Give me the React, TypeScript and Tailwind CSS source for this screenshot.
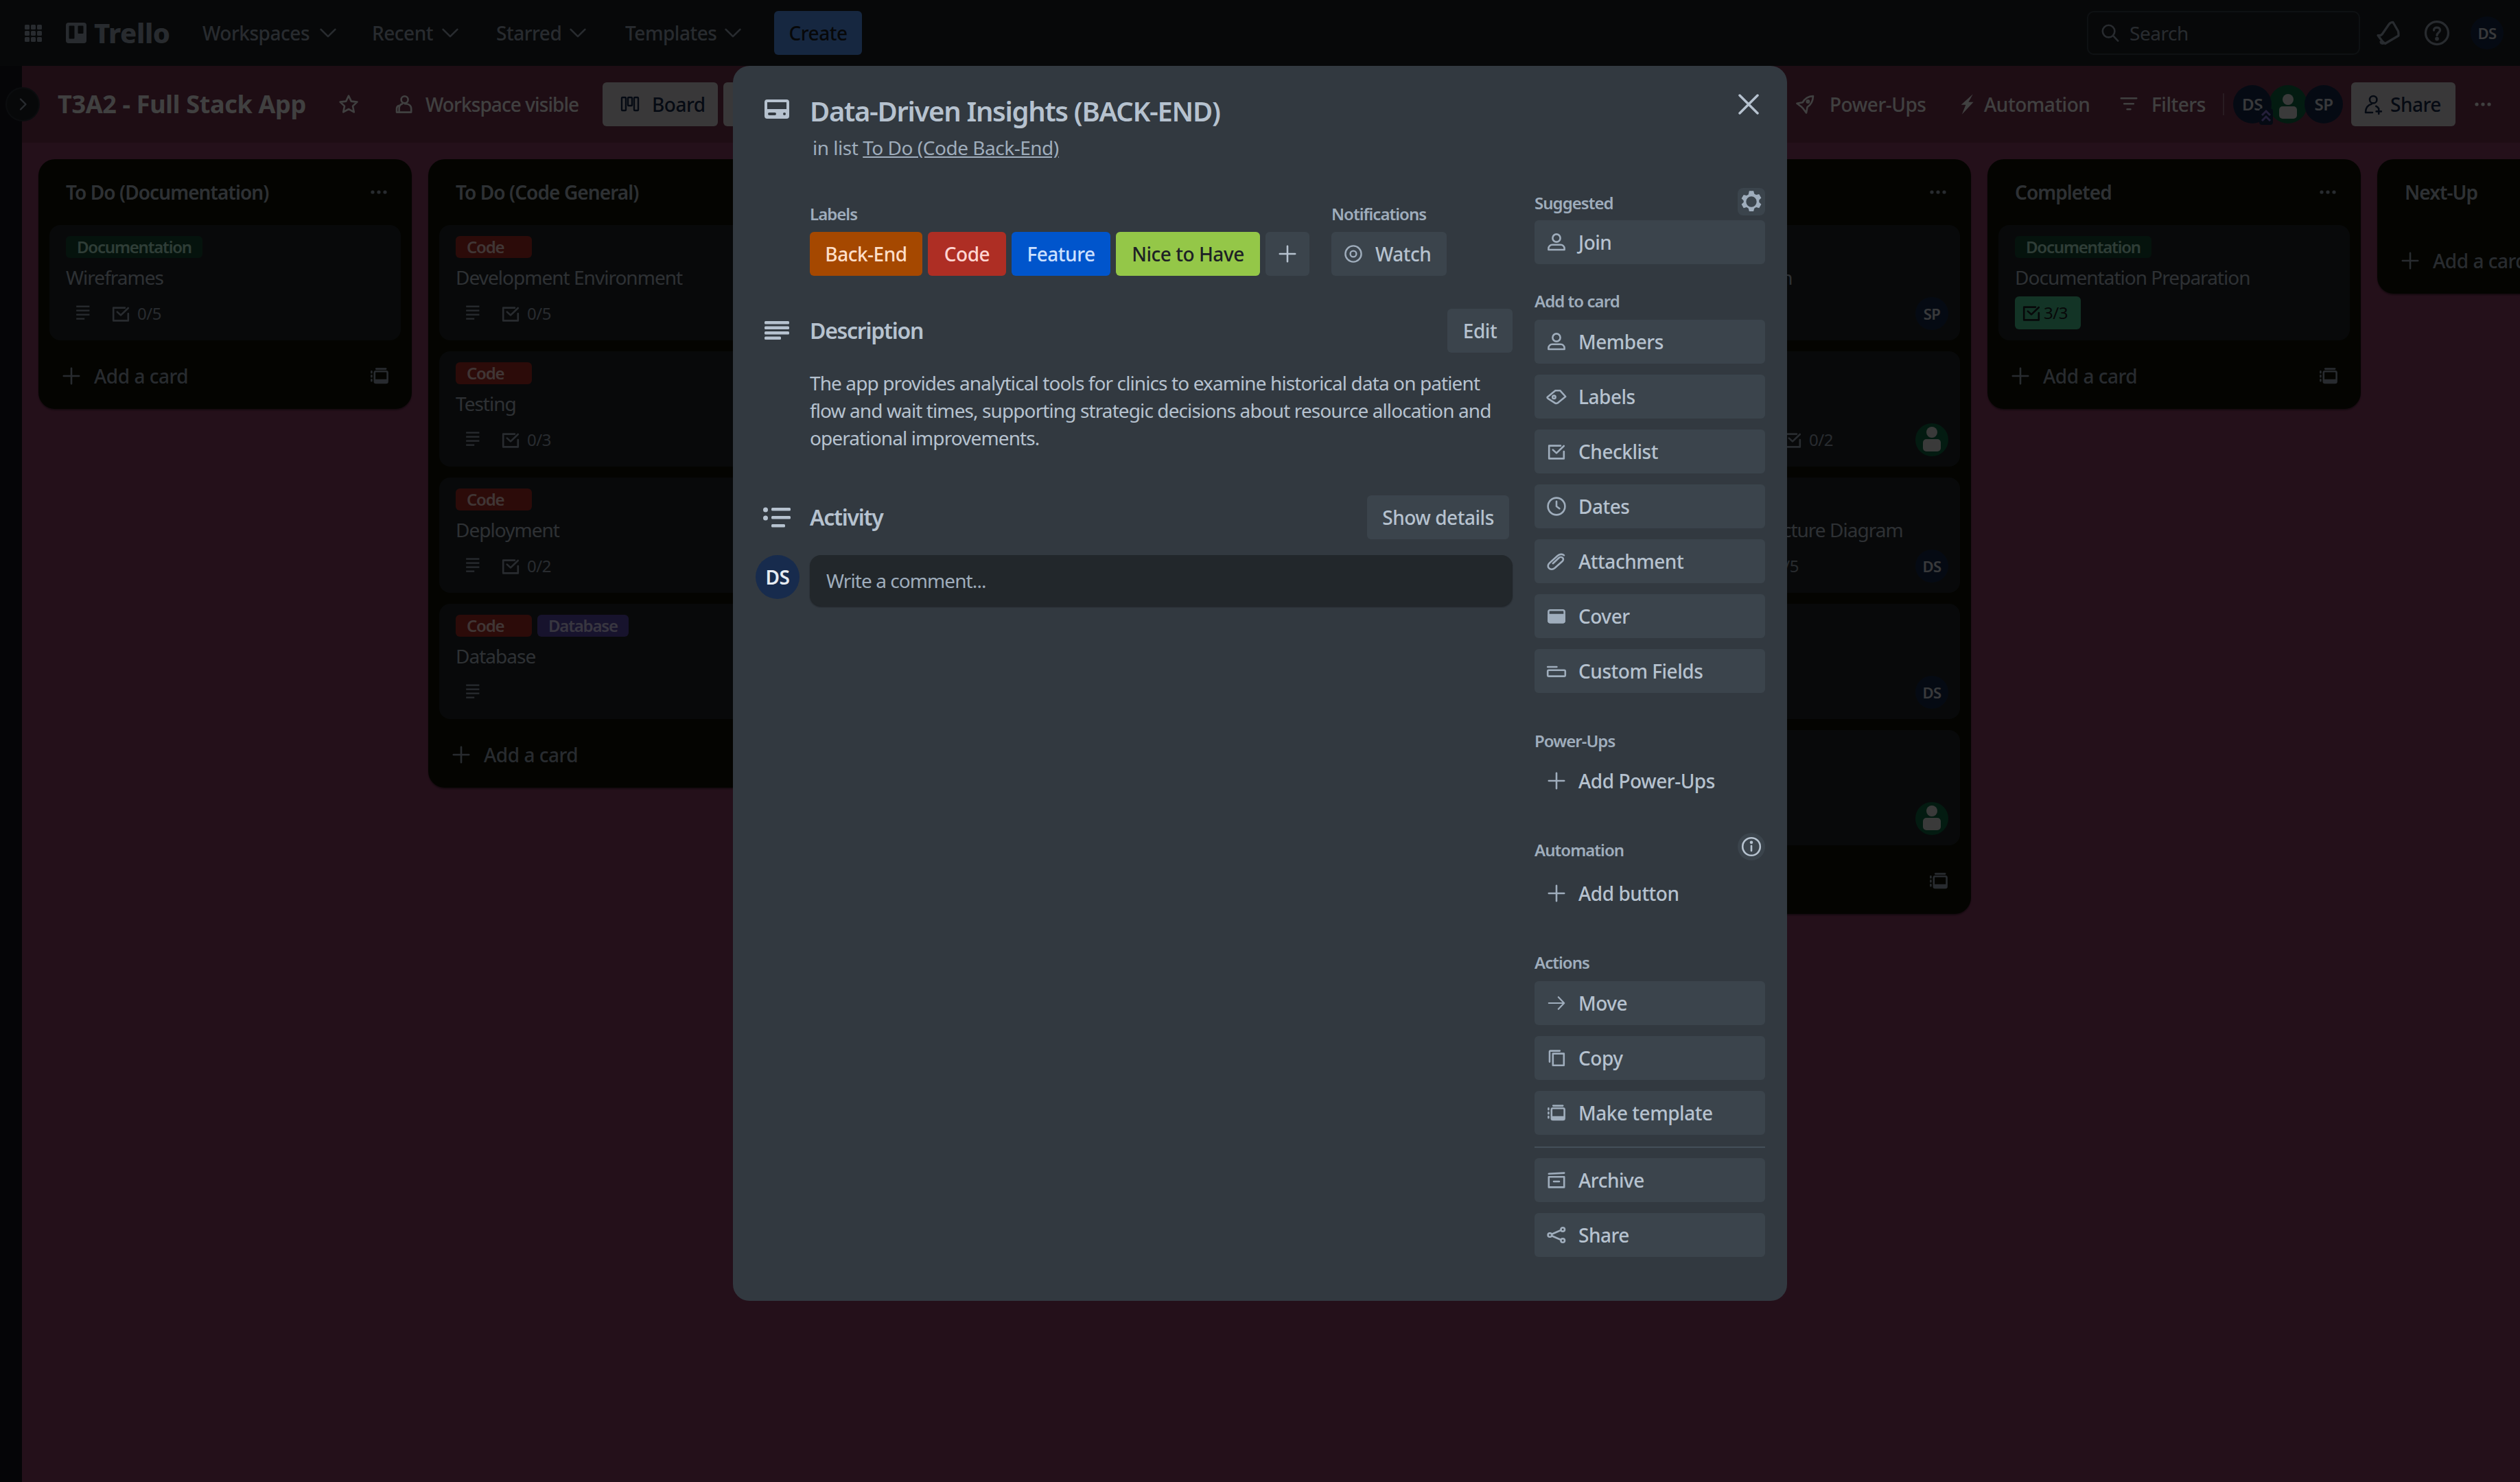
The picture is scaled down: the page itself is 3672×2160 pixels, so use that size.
import type { ReactNode } from "react";

type IconProps = { size?: number; vb?: number; className?: string; sw?: number; children: ReactNode };

function Icon({ size = 32, vb = 16, className = "", sw = 1.3, children }: IconProps) {
  return (
    <svg
      width={size}
      height={size}
      viewBox={`0 0 ${vb} ${vb}`}
      fill="none"
      stroke="currentColor"
      strokeWidth={sw}
      strokeLinecap="round"
      strokeLinejoin="round"
      className={`flex-none ${className}`}
    >
      {children}
    </svg>
  );
}

const Person = () => (
  <Icon>
    <circle cx="8" cy="5" r="2.8" />
    <path d="M2.200 13.500v-.9a2.700 2.700 0 0 1 2.700-2.700h6.200a2.700 2.700 0 0 1 2.700 2.700v.9z" />
  </Icon>
);
const Tag = () => (
  <Icon>
    <path d="M1.400 8.400 7.200 3.600h3.400l4 4.400-5.800 4.700c-.5.300-1 .4-1.500.2L1.800 9.400c-.4-.3-.6-.7-.4-1z" />
    <circle cx="6.200" cy="8.400" r="1.100" />
  </Icon>
);
const Check = ({ className = "" }: { className?: string }) => (
  <Icon className={className}>
    <path d="M13.400 8v5.200H2.600V3.800H11" />
    <path d="m5.400 6.800 2.600 2.400 5.400-5.200" />
  </Icon>
);
const Clock = () => (
  <Icon>
    <circle cx="8" cy="8" r="6.200" />
    <path d="M8 4.400V8l2.200 1.600" />
  </Icon>
);
const Clip = () => (
  <Icon>
    <path d="m5.400 9.600 4.400-4.100c.8-.7 2-.7 2.700 0 .7.700.6 1.800-.2 2.500l-5.600 5c-1.300 1.100-3.200 1.100-4.200.1-1-1-.8-2.700.4-3.800l5.900-5.300c1.500-1.300 3.600-1.400 4.700-.3" />
  </Icon>
);
const Cover = () => (
  <Icon>
    <rect x="2.200" y="3.600" width="11.600" height="9" rx="1.200" />
    <path d="M2.200 7h11.600v4.400a1.200 1.200 0 0 1-1.200 1.200H3.400a1.200 1.200 0 0 1-1.200-1.200z" fill="currentColor" />
  </Icon>
);
const Fields = () => (
  <Icon>
    <path d="M1.600 5h6.600" />
    <rect x="1.600" y="7.400" width="12.800" height="4.400" rx="0.800" />
  </Icon>
);
const Plus = ({ className = "" }: { className?: string }) => (
  <Icon className={className}>
    <path d="M8 2.400v11.200M2.400 8h11.200" />
  </Icon>
);
const Arrow = () => (
  <Icon sw={1.100}>
    <path d="M2.400 8h11M9.400 3.600 13.600 8l-4.200 4.400" />
  </Icon>
);
const Copy = () => (
  <Icon>
    <rect x="5.400" y="4.800" width="8" height="8.600" />
    <path d="M3 10.800V3.400c0-.3.2-.6.600-.6h6.800" />
  </Icon>
);
const Template = ({ className = "" }: { className?: string }) => (
  <Icon className={className}>
    <rect x="4.400" y="4.600" width="9.400" height="8.400" rx="1" />
    <path d="M9 10.400h4.800V13H5.400a1 1 0 0 1-1-1v-1.600z" fill="currentColor" stroke="none" />
    <path d="M5.600 2.800h7M2.200 4.600v1M2.200 7.600v1M2.200 10.600v1" />
  </Icon>
);
const Archive = () => (
  <Icon>
    <rect x="2.400" y="5.600" width="11.200" height="7.600" />
    <path d="M2.400 3.400 13.600 2.800M6 9h4" />
  </Icon>
);
const ShareNodes = () => (
  <Icon>
    <circle cx="3.200" cy="8" r="1.400" />
    <circle cx="12.600" cy="4" r="1.400" />
    <circle cx="12.600" cy="12" r="1.400" />
    <path d="m4.600 7.400 6.600-2.900M4.600 8.600l6.600 2.900" />
  </Icon>
);
const Gear = () => (
  <svg width="36" height="36" viewBox="0 0 16 16" className="flex-none" fill="currentColor">
    <path
      fillRule="evenodd"
      d="M6.600 1h2.800l.5 1.900 1.200.7 1.900-.5 1.400 2.400-1.400 1.400v1.400l1.400 1.400-1.400 2.400-1.900-.5-1.200.7-.5 1.900H6.600l-.5-1.900-1.200-.7-1.900.5-1.400-2.400 1.400-1.400V7.300L1.600 5.900 3 3.500l1.900.5 1.200-.7zM8 4.600a3.400 3.400 0 1 0 0 6.800 3.400 3.400 0 0 0 0-6.800z"
    />
  </svg>
);
const Info = () => (
  <Icon>
    <circle cx="8" cy="8" r="6.400" />
    <path d="M8 7.400v3.600" />
    <circle cx="8" cy="4.900" r="0.500" fill="currentColor" />
  </Icon>
);
const Chevron = () => (
  <Icon className="ml-auto">
    <path d="m2.800 5.400 5.200 5.200 5.200-5.200" />
  </Icon>
);
const Dots = () => (
  <svg width="32" height="32" viewBox="0 0 32 32" fill="currentColor" className="flex-none">
    <circle cx="7" cy="16" r="2.600" />
    <circle cx="16" cy="16" r="2.600" />
    <circle cx="25" cy="16" r="2.600" />
  </svg>
);
const Lines = ({ className = "" }: { className?: string }) => (
  <Icon className={className} sw={1.100}>
    <path d="M3.600 2.800h9.600M3.600 5.800h9.600M3.600 8.800h9.600M3.600 11.800h6" strokeLinecap="butt" />
  </Icon>
);
const Star = () => (
  <Icon>
    <path d="m8 1.800 1.900 4 4.300.5-3.200 3 .9 4.400L8 11.500l-3.900 2.200.9-4.400-3.200-3 4.300-.5z" />
  </Icon>
);
const PeopleVisible = () => (
  <Icon>
    <circle cx="8.800" cy="4.600" r="2.500" />
    <path d="M4.800 13.800V11c0-1.800 1-3 2.400-3.400M13.600 13.800H3v-2.600c0-1 .6-1.800 1.400-2.200M9 7.600c2.600 0 4.600 1.200 4.600 3.600v2.600" />
  </Icon>
);
const Rocket = () => (
  <Icon>
    <path d="M14 2c-3.600.2-6 1.600-7.600 4.600L2.200 7.400l3 2.200 1.600 1.600 2.200 3 .8-4.200C12.400 8.400 13.800 5.600 14 2z" />
    <circle cx="10.200" cy="6" r="0.800" />
  </Icon>
);
const Bolt = () => (
  <svg width="32" height="32" viewBox="0 0 16 16" fill="currentColor" className="flex-none">
    <path d="M12.400.6 3.800 8.400h3.400L4.400 15.400l8.400-9H9.200z" />
  </svg>
);
const Filter = () => (
  <Icon sw={1.300}>
    <path d="M2.400 3.600h11.200M4.600 7.600h6.800M6.800 11.600h2.400" />
  </Icon>
);
const ShareUser = () => (
  <Icon>
    <circle cx="7.600" cy="4.600" r="2.600" />
    <path d="M2 14c0-3 1.600-5.400 4.400-6.200M9.600 9.400c1 .4 1.600 1 2 1.800M7 14H2M11.600 11.400v3.600M9.800 13.200h3.600" />
  </Icon>
);
const Search = () => (
  <Icon>
    <circle cx="6.800" cy="6.800" r="4.400" />
    <path d="m10.200 10.200 3.400 3.600" />
  </Icon>
);
const Bell = () => (
  <Icon size={40}>
    <path d="M10.800 1.800 13.800 7c.3 1.200.2 2 .2 2.600l-7.800 4.600c-.8-.4-1.400-1-2-1.800L2 9.400c.8.2 1.800 0 2.400-.6l4-5.800c.6-.8 1.400-1.200 2.400-1.200z" />
    <path d="M3.600 13.200c.2.800.8 1.200 1.600.8" />
  </Icon>
);
const Help = () => (
  <Icon size={40}>
    <circle cx="8" cy="8" r="6.600" />
    <path d="M6.200 6.400C6.200 5.400 7 4.800 8 4.800s1.800.6 1.800 1.600c0 1.400-1.800 1.400-1.800 3" />
    <circle cx="8" cy="11.400" r="0.500" fill="currentColor" />
  </Icon>
);
const AppGrid = () => (
  <svg width="32" height="32" viewBox="0 0 32 32" fill="currentColor" className="flex-none">
    {[4, 13, 22].flatMap((y) =>
      [4, 13, 22].map((x) => <rect key={`${x}-${y}`} x={x} y={y} width="7" height="7" rx="1.500" />),
    )}
  </svg>
);

function Avatar({ text, size = "md" }: { text?: string; size?: "sm" | "md" }) {
  const box = size === "sm" ? "w-[48px] h-[48px] text-[22px]" : "w-[56px] h-[56px] text-[24px]";
  if (!text) {
    return (
      <div className={`${box} flex-none rounded-full bg-[#0d6b45] flex flex-col items-center justify-end overflow-hidden`}>
        <div className="w-[16px] h-[16px] rounded-full bg-[#e6e6e6] mb-[2px]" />
        <div className="w-[26px] h-[18px] rounded-[5px] bg-[#e6e6e6] mb-[7px]" />
      </div>
    );
  }
  return (
    <div className={`${box} flex-none rounded-full bg-[#172b4d] text-[#e0e4ea] font-semibold flex items-center justify-center`}>
      {text}
    </div>
  );
}

const LABEL_STYLES: Record<string, string> = {
  Documentation: "bg-[#164b35] text-[#baf3db]",
  Code: "bg-[#ae2e24] text-[#ffd5d2]",
  Database: "bg-[#5e4db2] text-[#dfd8fd]",
};

type CardData = {
  labels?: string[];
  title?: string;
  desc?: boolean;
  check?: string;
  done?: boolean;
  member?: string | null;
  shift?: string;
};

function Card({ labels = [], title, desc, check, done, member, shift = "" }: CardData) {
  return (
    <div className="h-[168px] rounded-[16px] bg-[#22272b] pt-[16px] flex flex-col">
      <div className="flex gap-[8px] px-[24px] h-[32px]">
        {labels.map((l) => (
          <span
            key={l}
            className={`${LABEL_STYLES[l]} min-w-[111px] h-[32px] rounded-[6px] px-[16px] text-[24px] leading-[32px] font-semibold tracking-[-0.05em]`}
          >
            {l}
          </span>
        ))}
      </div>
      <div className="mt-[8px] h-[40px] px-[24px] text-[28px] leading-[40px] text-[#b6c2cf] whitespace-nowrap tracking-[-0.035em]">
        {title}
      </div>
      {done ? (
        <div className="mt-[8px] ml-[24px] w-[96px] h-[48px] rounded-[6px] bg-[#4bce97] text-[#1d2125] flex items-center pl-[8px] gap-[2px] text-[24px]">
          <Check />
          <span>{check}</span>
        </div>
      ) : (
        <div className="mt-[9px] h-[48px] pl-[32px] flex items-center text-[#9fadbc] text-[24px]">
          {desc && <Lines />}
          {check && (
            <span className={`flex items-center gap-[8px] ml-[24px] ${shift}`}>
              <Check />
              {check}
            </span>
          )}
          {member !== undefined && (
            <span className="ml-auto mr-[17px]">
              <Avatar text={member ?? undefined} size="sm" />
            </span>
          )}
        </div>
      )}
    </div>
  );
}

function List({ title, cards = [] }: { title?: string; cards?: CardData[] }) {
  return (
    <section className="w-[544px] flex-none rounded-[24px] bg-[#101204] shadow-[0_2px_2px_rgba(0,0,0,0.4)]">
      <header className="h-[96px] pl-[40px] pr-[32px] flex items-center justify-between text-[#b6c2cf]">
        <h2 className="text-[28px] font-semibold tracking-[-0.033em]">{title}</h2>
        <span className="text-[#9fadbc]">
          <Dots />
        </span>
      </header>
      {cards.length > 0 && (
        <div className="flex flex-col gap-[16px] px-[16px]">
          {cards.map((c, i) => (
            <Card key={i} {...c} />
          ))}
        </div>
      )}
      <div className="h-[100px] pl-[32px] pr-[31px] pt-[4px] flex items-center text-[#9fadbc]">
        <Plus />
        {title && <span className="ml-[17px] text-[28px] font-medium whitespace-nowrap">Add a card</span>}
        <Template className="ml-auto" />
      </div>
    </section>
  );
}

function TopBar() {
  const nav: [string, string][] = [
    ["Workspaces", "w-[199px] mr-[48px]"],
    ["Recent", "w-[130px] mr-[51px]"],
    ["Starred", "w-[135px] mr-[53px]"],
    ["Templates", "w-[173px] mr-[45px]"],
  ];
  return (
    <header className="h-[96px] bg-[#1d2125] flex items-center pl-[32px] text-[#9fadbc]">
      <AppGrid />
      <div className="ml-[32px] w-[199px] flex items-center">
        <svg width="30" height="30" viewBox="0 0 30 30" className="flex-none">
          <path
            fillRule="evenodd"
            fill="currentColor"
            d="M4 0h22a4 4 0 0 1 4 4v22a4 4 0 0 1-4 4H4a4 4 0 0 1-4-4V4a4 4 0 0 1 4-4zm1.500 4.500a1 1 0 0 0-1 1v17a1 1 0 0 0 1 1h6a1 1 0 0 0 1-1v-17a1 1 0 0 0-1-1zm13 0a1 1 0 0 0-1 1v9.500a1 1 0 0 0 1 1h6a1 1 0 0 0 1-1V5.500a1 1 0 0 0-1-1z"
          />
        </svg>
        <span className="ml-[11px] text-[40px] leading-none font-extrabold tracking-[-0.01em]">Trello</span>
      </div>
      {nav.map(([name, cls]) => (
        <div key={name} className={`${cls} flex items-center text-[28px] font-medium flex-none`}>
          {name}
          <Chevron />
        </div>
      ))}
      <div className="ml-[-1px] w-[128px] h-[64px] rounded-[6px] bg-[#579dff] text-[#1d2125] text-[28px] font-medium flex items-center justify-center">
        Create
      </div>
      <div className="ml-auto w-[398px] h-[64px] rounded-[10px] border-2 border-[#3b444c] flex items-center pl-[16px] gap-[12px]">
        <Search />
        <span className="text-[28px]">Search</span>
      </div>
      <div className="ml-[21px] w-[71px] flex justify-start">
        <Bell />
      </div>
      <Help />
      <div className="ml-[29px] mr-[24px]">
        <Avatar text="DS" size="sm" />
      </div>
    </header>
  );
}

function BoardHeader() {
  return (
    <div className="relative h-[112px] bg-[#783450] flex items-center text-white text-[28px] font-medium">
      <h1 className="ml-[52px] w-[376px] flex-none text-[36px] font-bold whitespace-nowrap tracking-[-0.009em]">T3A2 - Full Stack App</h1>
      <div className="ml-[32px]">
        <Star />
      </div>
      <div className="ml-[48px] w-[306px] flex-none flex items-center gap-[16px]">
        <PeopleVisible />
        <span className="whitespace-nowrap tracking-[-0.033em]">Workspace visible</span>
      </div>
      <div className="w-[168px] h-[64px] rounded-[6px] bg-[#e4dfe1] text-[#172b4d] flex items-center pl-[24px] gap-[16px]">
        <svg width="32" height="32" viewBox="0 0 16 16" fill="none" stroke="currentColor" strokeWidth="1.200" className="flex-none">
          <rect x="2" y="3" width="3" height="9.500" rx="0.500" />
          <rect x="6.500" y="3" width="3" height="6" rx="0.500" />
          <rect x="11" y="3" width="3" height="9.500" rx="0.500" />
        </svg>
        Board
      </div>
      <div className="ml-[8px] w-[120px] h-[64px] rounded-[6px] bg-[#e4dfe1]" />

      <div className="ml-auto flex items-center pr-[22px]">
        <div className="w-[236px] flex items-center gap-[20px]">
          <Rocket />
          Power-Ups
        </div>
        <div className="w-[236px] flex items-center gap-[9px]">
          <Bolt />
          Automation
        </div>
        <div className="w-[153px] flex items-center gap-[17px]">
          <Filter />
          Filters
        </div>
        <div className="w-[2px] h-[32px] bg-white/30 mr-[13px]" />
        <div className="flex items-center">
          <div className="relative">
            <Avatar text="DS" />
            <svg width="20" height="24" viewBox="0 0 10 12" className="absolute right-[-2px] bottom-[-2px] text-[#8f7ee7]" fill="none" stroke="currentColor" strokeWidth="1.500">
              <rect width="10" height="12" rx="2" fill="#172b4d" stroke="none" />
              <path d="m2 5 3-3 3 3M2 9l3-3 3 3" />
            </svg>
          </div>
          <div className="ml-[-4px]">
            <Avatar />
          </div>
          <div className="ml-[-4px]">
            <Avatar text="SP" />
          </div>
        </div>
        <div className="ml-[12px] w-[152px] h-[64px] rounded-[6px] bg-[#e4dfe1] text-[#172b4d] flex items-center pl-[17px] gap-[8px]">
          <ShareUser />
          Share
        </div>
        <div className="ml-[24px] mr-[16px]">
          <Dots />
        </div>
      </div>
    </div>
  );
}

// lists 3 and 4 sit completely behind the open card, list 5 shows only at the right of it
const board: { title?: string; cards?: CardData[] }[] = [
  {
    title: "To Do (Documentation)",
    cards: [{ labels: ["Documentation"], title: "Wireframes", desc: true, check: "0/5" }],
  },
  {
    title: "To Do (Code General)",
    cards: [
      { labels: ["Code"], title: "Development Environment", desc: true, check: "0/5" },
      { labels: ["Code"], title: "Testing", desc: true, check: "0/3" },
      { labels: ["Code"], title: "Deployment", desc: true, check: "0/2" },
      { labels: ["Code", "Database"], title: "Database", desc: true },
    ],
  },
  {},
  {},
  {
    cards: [
      { title: "User Authentication", member: "SP" },
      { check: "0/2", member: null, desc: true, shift: "ml-[188px]" },
      { title: "Application Architecture Diagram", check: "0/5", desc: true, member: "DS", shift: "ml-[138px]" },
      { member: "DS" },
      { member: null },
    ],
  },
  {
    title: "Completed",
    cards: [{ labels: ["Documentation"], title: "Documentation Preparation", check: "3/3", done: true }],
  },
  { title: "Next-Up" },
];

function SideButton({ icon, children, bare, className = "" }: { icon: ReactNode; children: ReactNode; bare?: boolean; className?: string }) {
  return (
    <div
      className={`h-[64px] rounded-[6px] flex items-center pl-[16px] gap-[16px] text-[28px] font-medium text-[#b6c2cf] ${bare ? "" : "bg-[#3b444c]"} ${className}`}
    >
      <span className="text-[#9fadbc]">{icon}</span>
      {children}
    </div>
  );
}

const SideHeading = ({ children, className = "" }: { children: ReactNode; className?: string }) => (
  <div className={`text-[24px] leading-[32px] font-semibold text-[#9fadbc] tracking-[-0.04em] ${className}`}>{children}</div>
);

function Sidebar() {
  const add: [ReactNode, string][] = [
    [<Person />, "Members"],
    [<Tag />, "Labels"],
    [<Check />, "Checklist"],
    [<Clock />, "Dates"],
    [<Clip />, "Attachment"],
    [<Cover />, "Cover"],
    [<Fields />, "Custom Fields"],
  ];
  return (
    <aside className="w-[336px] flex-none mt-[178px] flex flex-col">
      <div className="h-[40px] flex items-center justify-between">
        <SideHeading className="pt-[4px]">Suggested</SideHeading>
        <div className="w-[40px] h-[40px] rounded-[8px] bg-[#3b444c] flex items-center justify-center text-[#9fadbc]">
          <Gear />
        </div>
      </div>
      <SideButton icon={<Person />} className="mt-[7px]">
        Join
      </SideButton>

      <SideHeading className="mt-[38px]">Add to card</SideHeading>
      <div className="mt-[11px] flex flex-col gap-[16px]">
        {add.map(([icon, name]) => (
          <SideButton key={name} icon={icon}>
            {name}
          </SideButton>
        ))}
      </div>

      <SideHeading className="mt-[54px]">Power-Ups</SideHeading>
      <SideButton bare icon={<Plus />} className="mt-[10px]">
        Add Power-Ups
      </SideButton>

      <div className="mt-[44px] h-[40px] flex items-center justify-between">
        <SideHeading className="pt-[10px]">Automation</SideHeading>
        <div className="w-[40px] h-[40px] rounded-full bg-[#3b444c] flex items-center justify-center text-[#b6c2cf]">
          <Info />
        </div>
      </div>
      <SideButton bare icon={<Plus />} className="mt-[16px]">
        Add button
      </SideButton>

      <SideHeading className="mt-[53px]">Actions</SideHeading>
      <div className="mt-[11px] flex flex-col gap-[16px]">
        <SideButton icon={<Arrow />}>Move</SideButton>
        <SideButton icon={<Copy />}>Copy</SideButton>
        <SideButton icon={<Template />}>Make template</SideButton>
      </div>
      <div className="mt-[17px] h-[2px] bg-[#a6c5e229]" />
      <div className="mt-[15px] flex flex-col gap-[16px]">
        <SideButton icon={<Archive />}>Archive</SideButton>
        <SideButton icon={<ShareNodes />}>Share</SideButton>
      </div>
    </aside>
  );
}

function CardModal() {
  const labels: [string, string][] = [
    ["Back-End", "w-[164px] bg-[#a54800] text-[#fedec8]"],
    ["Code", "w-[114px] bg-[#ae2e24] text-[#ffd5d2]"],
    ["Feature", "w-[144px] bg-[#0055cc] text-[#cce0ff]"],
    ["Nice to Have", "w-[210px] bg-[#94c748] text-[#1d2125]"],
  ];
  return (
    <div className="absolute left-[1068px] top-[96px] w-[1536px] h-[1800px] rounded-[24px] bg-[#323940] text-[#b6c2cf] flex">
      <div className="absolute right-[36px] top-[36px] w-[40px] h-[40px] flex items-center justify-center">
        <svg width="32" height="32" viewBox="0 0 32 32" fill="none" stroke="currentColor" strokeWidth="3.500" strokeLinecap="round">
          <path d="M3 3l26 26M29 3 3 29" />
        </svg>
      </div>

      <div className="w-[1136px] flex-none pt-[42px] pl-[46px]">
        {/* title */}
        <div className="flex">
          <svg width="36" height="28" viewBox="0 0 36 28" className="flex-none mt-[7px] mr-[30px]" fill="currentColor">
            <path
              fillRule="evenodd"
              d="M4 0h28a4 4 0 0 1 4 4v20a4 4 0 0 1-4 4H4a4 4 0 0 1-4-4V4a4 4 0 0 1 4-4zm0 4v10h28V4zm3 15a2 2 0 0 0 0 4h8a2 2 0 0 0 0-4zm22 0a2 2 0 1 0 0 4 2 2 0 0 0 0-4z"
            />
          </svg>
          <div>
            <h1 className="text-[40px] leading-[48px] font-semibold tracking-[-0.033em]">Data-Driven Insights (BACK-END)</h1>
            <p className="mt-[9px] ml-[4px] text-[28px] leading-[40px] text-[#9fadbc]">
              in list <span className="underline">To Do (Code Back-End)</span>
            </p>
          </div>
        </div>

        {/* labels + notifications */}
        <div className="ml-[66px] mt-[61px] flex gap-[32px]">
          <div>
            <div className="text-[24px] leading-[32px] font-semibold text-[#9fadbc] tracking-[-0.04em]">Labels</div>
            <div className="mt-[10px] flex gap-[8px]">
              {labels.map(([name, cls]) => (
                <span key={name} className={`${cls} h-[64px] rounded-[6px] text-center text-[28px] leading-[64px] font-medium`}>
                  {name}
                </span>
              ))}
              <span className="w-[64px] h-[64px] rounded-[6px] bg-[#3b444c] flex items-center justify-center text-[#b6c2cf]">
                <Plus />
              </span>
            </div>
          </div>
          <div>
            <div className="text-[24px] leading-[32px] font-semibold text-[#9fadbc] tracking-[-0.04em]">Notifications</div>
            <div className="mt-[10px] w-[168px] h-[64px] rounded-[6px] bg-[#3b444c] flex items-center pl-[16px] gap-[16px] text-[28px] font-medium">
              <svg width="32" height="32" viewBox="0 0 16 16" fill="none" stroke="currentColor" strokeWidth="1.200" className="flex-none text-[#9fadbc]">
                <circle cx="8" cy="8" r="5.800" />
                <circle cx="8" cy="8" r="2.200" />
              </svg>
              Watch
            </div>
          </div>
        </div>

        {/* description */}
        <div className="mt-[48px] flex items-center h-[64px]">
          <svg width="36" height="28" viewBox="0 0 36 28" className="flex-none mr-[30px]" fill="currentColor">
            <rect y="0" width="36" height="4.500" rx="1.500" />
            <rect y="7.500" width="36" height="4.500" rx="1.500" />
            <rect y="15" width="36" height="4.500" rx="1.500" />
            <rect y="22.500" width="24" height="4.500" rx="1.500" />
          </svg>
          <h2 className="text-[32px] font-semibold tracking-[-0.04em]">Description</h2>
          <span className="ml-auto w-[95px] h-[64px] rounded-[6px] bg-[#3b444c] flex items-center justify-center text-[28px] font-medium">
            Edit
          </span>
        </div>
        <p className="ml-[66px] mt-[24px] w-[1024px] text-[28px] leading-[40px] tracking-[-0.032em]">
          The app provides analytical tools for clinics to examine historical data on patient flow and wait times, supporting
          strategic decisions about resource allocation and operational improvements.
        </p>

        {/* activity */}
        <div className="mt-[64px] flex items-center h-[64px]">
          <svg width="40" height="30" viewBox="0 0 40 30" className="flex-none ml-[-2px] mr-[28px]" fill="currentColor">
            <circle cx="3.500" cy="4" r="3.500" />
            <circle cx="3.500" cy="16" r="3.500" />
            <rect x="12" y="1" width="28" height="4.500" rx="1.500" />
            <rect x="12" y="13" width="28" height="4.500" rx="1.500" />
            <rect x="12" y="25" width="20" height="4.500" rx="1.500" />
          </svg>
          <h2 className="text-[32px] font-semibold tracking-[-0.04em]">Activity</h2>
          <span className="ml-auto mr-[5px] h-[64px] w-[207px] rounded-[6px] bg-[#3b444c] flex items-center justify-center text-[28px] font-medium">
            Show details
          </span>
        </div>
        <div className="mt-[23px] ml-[-13px] flex items-start">
          <div className="w-[64px] h-[64px] rounded-full bg-[#172b4d] text-[#e6ebf2] text-[28px] font-semibold flex items-center justify-center flex-none mr-[15px]">
            DS
          </div>
          <div className="w-[1024px] h-[74px] rounded-[16px] bg-[#22272b] shadow-[0_2px_2px_rgba(0,0,0,0.35)] pl-[24px] flex items-center text-[28px] text-[#9fadbc] tracking-[-0.033em]">
            Write a comment...
          </div>
        </div>
      </div>

      <div className="w-[32px] flex-none" />
      <Sidebar />
    </div>
  );
}

export default function App() {
  return (
    <div className="relative w-[3672px] h-[2160px] overflow-hidden bg-[#904068] tracking-[-0.03em] font-['Noto_Sans','Open_Sans',sans-serif]">
      <TopBar />
      <div className="flex h-[2064px]">
        <div className="w-[32px] flex-none bg-[#14161f]" />
        <main className="flex-1 min-w-0">
          <BoardHeader />
          <div className="flex items-start gap-[24px] pl-[24px] pt-[24px]">
            {board.map((l, i) => (
              <List key={i} {...l} />
            ))}
          </div>
        </main>
      </div>
      {/* collapsed sidebar toggle */}
      <div className="absolute left-[8px] top-[127px] w-[50px] h-[50px] rounded-full bg-[#1d2125] border-2 border-[#2c333a] flex items-center justify-center text-[#9fadbc]">
        <svg width="24" height="24" viewBox="0 0 16 16" fill="none" stroke="currentColor" strokeWidth="1.600" strokeLinecap="round" strokeLinejoin="round">
          <path d="m6 3 5 5-5 5" />
        </svg>
      </div>

      <div className="absolute inset-0 bg-black/75">
        <CardModal />
      </div>
    </div>
  );
}
